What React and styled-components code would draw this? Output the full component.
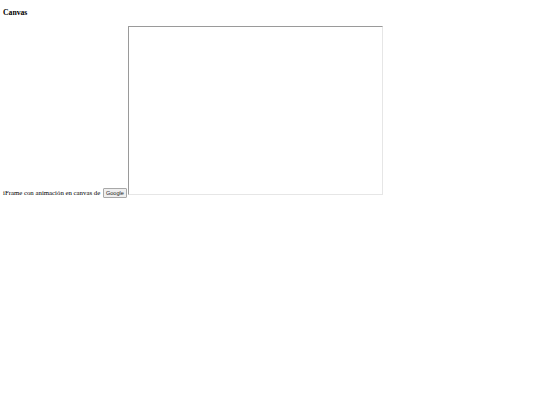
import React from "react";
import styled, { createGlobalStyle } from "styled-components";

const Global = createGlobalStyle`
  html, body { margin: 0; padding: 0; background: #fff; }
  body { font-family: "Liberation Serif", "Times New Roman", serif; color: #000; }
`;

const Page = styled.div`
  padding: 0 3px;
  font-size: 6.8px;
  line-height: normal;
`;

const Title = styled.h3`
  font-size: 7.7px;
  font-weight: bold;
  margin: 8px 0 9px;
`;

const Line = styled.div`
  white-space: nowrap;
`;

const Btn = styled.button`
  font-family: "Liberation Sans", Arial, sans-serif;
  font-size: 5.6px;
  padding: 1px 2px;
  margin: 0 1.5px 0 1px;
  border: 1px solid #a8a8a8;
  border-radius: 1px;
  background: #efefef;
  color: #222;
  vertical-align: baseline;
`;

const Frame = styled.iframe`
  width: 253px;
  height: 167px;
  border-style: solid;
  border-width: 1.5px;
  border-color: #9a9a9a #e6e6e6 #e6e6e6 #9a9a9a;
  vertical-align: baseline;
  background: #fff;
`;

export default function App() {
  return (
    <>
      <Global />
      <Page>
        <Title>Canvas</Title>
        <Line>
          iFrame con animación en canvas de <Btn>Google</Btn>
          <Frame title="canvas" />
        </Line>
      </Page>
    </>
  );
}
